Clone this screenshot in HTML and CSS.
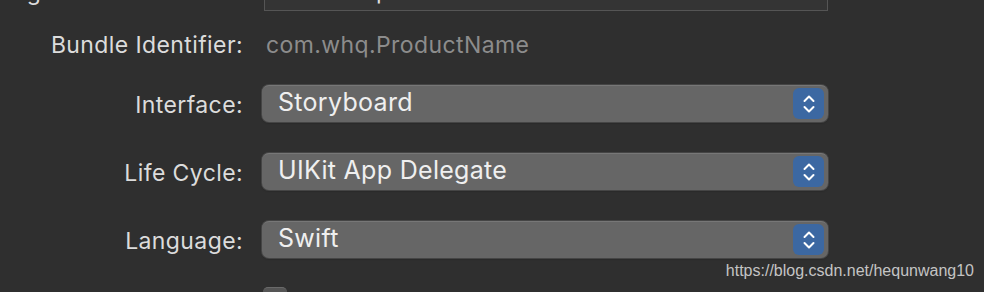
FILE: index.html
```html
<!DOCTYPE html>
<html lang="en">
<head>
    <meta charset="UTF-8">
    <title>Project Options</title>
    <link rel="stylesheet" href="styles.css">
</head>
<body>
    <div class="form">
        <div class="row row-org">
            <label class="label">Organization Identifier:</label>
            <div class="textfield">com.whq</div>
        </div>

        <div class="row row-bundle">
            <label class="label">Bundle Identifier:</label>
            <div class="value">com.whq.ProductName</div>
        </div>

        <div class="row row-popup">
            <label class="label">Interface:</label>
            <div class="popup">
                <span class="popup-text">Storyboard</span>
                <span class="stepper">
                    <svg width="14" height="20" viewBox="0 0 14 20"><path d="M2.5 7 L7 2.5 L11.5 7 M2.5 13 L7 17.5 L11.5 13" fill="none" stroke="#fff" stroke-width="2" stroke-linecap="round" stroke-linejoin="round"/></svg>
                </span>
            </div>
        </div>

        <div class="row row-popup">
            <label class="label">Life Cycle:</label>
            <div class="popup">
                <span class="popup-text">UIKit App Delegate</span>
                <span class="stepper">
                    <svg width="14" height="20" viewBox="0 0 14 20"><path d="M2.5 7 L7 2.5 L11.5 7 M2.5 13 L7 17.5 L11.5 13" fill="none" stroke="#fff" stroke-width="2" stroke-linecap="round" stroke-linejoin="round"/></svg>
                </span>
            </div>
        </div>

        <div class="row row-popup">
            <label class="label">Language:</label>
            <div class="popup">
                <span class="popup-text">Swift</span>
                <span class="stepper">
                    <svg width="14" height="20" viewBox="0 0 14 20"><path d="M2.5 7 L7 2.5 L11.5 7 M2.5 13 L7 17.5 L11.5 13" fill="none" stroke="#fff" stroke-width="2" stroke-linecap="round" stroke-linejoin="round"/></svg>
                </span>
            </div>
        </div>

        <div class="row row-check">
            <span></span>
            <span class="checkbox"></span>
        </div>
    </div>

    <div class="watermark">https://blog.csdn.net/hequnwang10</div>
</body>
</html>
```

FILE: styles.css
```css
* {
    margin: 0;
    padding: 0;
    box-sizing: border-box;
}

html, body {
    height: 100%;
}

body {
    font-family: Inter, 'Liberation Sans', sans-serif;
    background: #2f2f2f;
    color: #dedede;
    overflow: hidden;
    position: relative;
}

.form {
    display: flex;
    flex-direction: column;
    margin-top: -27px;
}

.row {
    display: grid;
    grid-template-columns: 243px 566px;
    column-gap: 19px;
    align-items: center;
}

.label {
    font-size: 23px;
    letter-spacing: 0.4px;
    text-align: right;
    color: #dcdcdc;
    white-space: nowrap;
    padding-top: 3px;
}

.row-org {
    height: 38px;
}

.row-org .label {
    padding-top: 0;
}

.textfield {
    height: 38px;
    margin-left: 2px;
    background: #343434;
    border: 1px solid #555;
    font-size: 23px;
    letter-spacing: 0.4px;
    color: #dedede;
    padding: 0 14px;
    line-height: 34px;
}

.row-bundle {
    height: 67px;
}

.row-bundle .label {
    padding-top: 0;
}

.value {
    font-size: 23px;
    letter-spacing: 0.4px;
    color: #8c8c8c;
    padding-left: 4px;
}

.row-popup {
    height: 37px;
    margin-top: 31px;
}

.row-bundle + .row-popup {
    margin-top: 7px;
}

.popup {
    height: 37px;
    background: #666;
    border-radius: 7px;
    box-shadow: 0 0 0 1px #454545, 0 1px 2px rgba(0, 0, 0, 0.4);
    border-top: 1px solid #777;
    display: flex;
    align-items: center;
    justify-content: space-between;
    padding: 0 4px 0 16px;
}

.popup-text {
    font-size: 25px;
    letter-spacing: 0.3px;
    color: #efefef;
    padding-bottom: 5px;
}

.stepper {
    width: 31px;
    height: 31px;
    background: #3c68a2;
    border-radius: 6px;
    display: flex;
    align-items: center;
    justify-content: center;
    margin-top: -1px;
}

.row-check {
    margin-top: 29px;
}

.checkbox {
    width: 24px;
    height: 24px;
    margin-left: 1px;
    background: #555;
    border-top: 1px solid #6a6a6a;
    border-radius: 5px;
}

.watermark {
    position: absolute;
    right: 10px;
    top: 262px;
    font-family: 'Liberation Sans', Arial, sans-serif;
    font-size: 16px;
    color: #c4c4c4;
}
```
